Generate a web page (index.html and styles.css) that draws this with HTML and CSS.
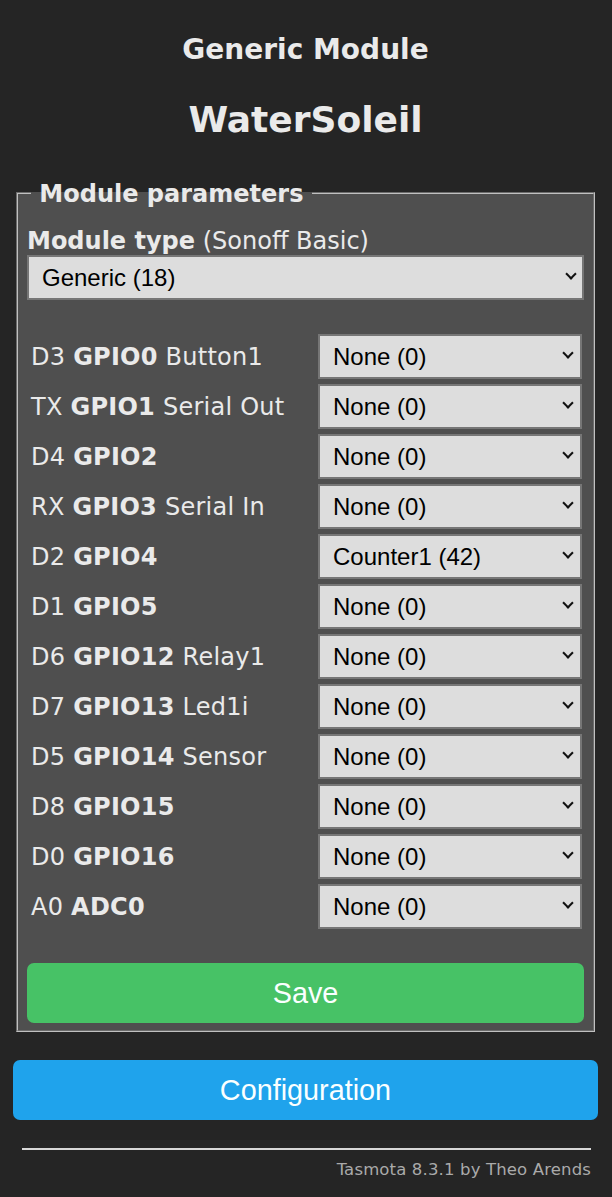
FILE: index.html
```html
<!DOCTYPE html>
<html lang="en">
<head>
<meta charset="utf-8">
<title>WaterSoleil - Configure Module</title>
<link rel="stylesheet" href="styles.css">
</head>
<body>
<div class="page">
  <div class="titles">
    <h3 class="module-name">Generic Module</h3>
    <h2 class="device-name">WaterSoleil</h2>
  </div>
  <fieldset class="params">
    <legend class="params-legend"><b>&nbsp;Module parameters&nbsp;</b></legend>
    <div class="module-type"><b>Module type</b> (Sonoff Basic)</div>
    <div class="sel sel-wide">
      <select class="select"><option>Generic (18)</option></select>
    </div>
    <div class="gpio-grid">
      <div class="gpio-label">D3 <b>GPIO0</b> Button1</div>
      <div class="sel"><select class="select"><option>None (0)</option></select></div>
      <div class="gpio-label">TX <b>GPIO1</b> Serial Out</div>
      <div class="sel"><select class="select"><option>None (0)</option></select></div>
      <div class="gpio-label">D4 <b>GPIO2</b></div>
      <div class="sel"><select class="select"><option>None (0)</option></select></div>
      <div class="gpio-label">RX <b>GPIO3</b> Serial In</div>
      <div class="sel"><select class="select"><option>None (0)</option></select></div>
      <div class="gpio-label">D2 <b>GPIO4</b></div>
      <div class="sel"><select class="select"><option>Counter1 (42)</option></select></div>
      <div class="gpio-label">D1 <b>GPIO5</b></div>
      <div class="sel"><select class="select"><option>None (0)</option></select></div>
      <div class="gpio-label">D6 <b>GPIO12</b> Relay1</div>
      <div class="sel"><select class="select"><option>None (0)</option></select></div>
      <div class="gpio-label">D7 <b>GPIO13</b> Led1i</div>
      <div class="sel"><select class="select"><option>None (0)</option></select></div>
      <div class="gpio-label">D5 <b>GPIO14</b> Sensor</div>
      <div class="sel"><select class="select"><option>None (0)</option></select></div>
      <div class="gpio-label">D8 <b>GPIO15</b></div>
      <div class="sel"><select class="select"><option>None (0)</option></select></div>
      <div class="gpio-label">D0 <b>GPIO16</b></div>
      <div class="sel"><select class="select"><option>None (0)</option></select></div>
      <div class="gpio-label">A0 <b>ADC0</b></div>
      <div class="sel"><select class="select"><option>None (0)</option></select></div>
    </div>
    <button class="btn btn-save">Save</button>
  </fieldset>
  <button class="btn btn-config">Configuration</button>
  <div class="footer">
    <hr class="footer-rule">
    <a class="footer-link" href="#">Tasmota 8.3.1 by Theo Arends</a>
  </div>
</div>
</body>
</html>
```

FILE: styles.css
```css
html, body {
  margin: 0;
  padding: 0;
  background: #252525;
}

body {
  font-family: "DejaVu Sans", Verdana, sans-serif;
  font-size: 24px;
  color: #eaeaea;
}

.page {
  width: 585px;
  margin-left: 13px;
  padding-bottom: 20px;
}

.titles {
  text-align: center;
}

.module-name {
  margin: 33px 0 0;
  font-size: 28px;
  line-height: 33px;
  font-weight: bold;
}

.device-name {
  margin: 33px 0 0;
  font-size: 36px;
  line-height: 42px;
  font-weight: bold;
}

.params {
  margin: 37px 3px 0 3px;
  padding: 21px 9px 7px 9px;
  border: 2px groove #c0c0c0;
  background: #4f4f4f;
  min-width: 0;
}

.params-legend {
  margin-left: 4px;
  padding: 2px 0 0;
  font-size: 24px;
  line-height: 28px;
}

.module-type {
  margin-top: -2px;
  line-height: 28px;
}

.sel {
  position: relative;
  height: 45px;
}

.sel::after {
  content: "";
  position: absolute;
  right: 10px;
  top: 15px;
  width: 6px;
  height: 6px;
  border-right: 2px solid #111;
  border-bottom: 2px solid #111;
  transform: rotate(45deg);
  pointer-events: none;
}

.sel-wide::after {
  right: 9px;
}

.select {
  -webkit-appearance: none;
  appearance: none;
  display: block;
  width: 100%;
  height: 45px;
  box-sizing: border-box;
  margin: 0;
  padding: 0 30px 0 13px;
  border: 2px solid #767676;
  border-radius: 0;
  background: #dddddd;
  color: #000000;
  font-family: "Liberation Sans", Arial, sans-serif;
  font-size: 24px;
  line-height: 41px;
}

.gpio-grid {
  display: grid;
  grid-template-columns: 1fr 264px;
  grid-auto-rows: 45px;
  row-gap: 5px;
  align-items: center;
  margin-top: 34px;
  padding: 0 2px 0 4px;
}

.gpio-label {
  line-height: 28px;
  white-space: nowrap;
  letter-spacing: 0.25px;
}

.btn {
  display: block;
  width: 100%;
  height: 60px;
  border: 0;
  border-radius: 7px;
  color: #faffff;
  font-family: "Liberation Sans", Arial, sans-serif;
  font-size: 28.8px;
  line-height: 60px;
  padding: 0;
  cursor: pointer;
}

.btn-save {
  margin-top: 33.5px;
  background: #47c266;
}

.btn-config {
  margin-top: 28px;
  background: #1fa3ec;
}

.footer {
  margin-top: 28px;
  padding: 0 7px 0 9px;
  text-align: right;
  font-size: 16.5px;
  line-height: 19px;
  letter-spacing: 0.15px;
}

.footer-rule {
  margin: 0 0 10.6px;
  height: 0;
  border: 0;
  border-top: 2px solid #d8d8d8;
}

.footer-link {
  color: #aaaaaa;
  text-decoration: none;
}
```
